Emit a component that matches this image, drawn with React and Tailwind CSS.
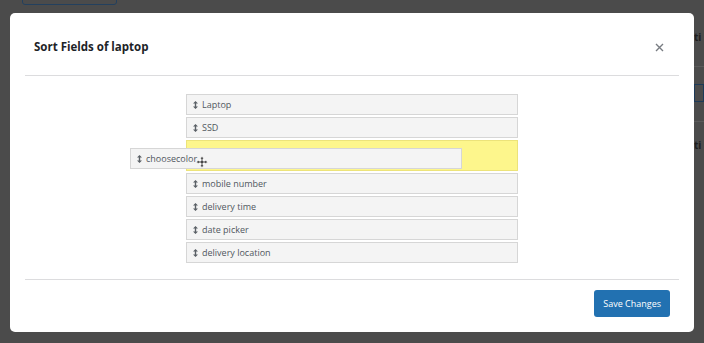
const fields = ["Laptop", "SSD", null, "mobile number", "delivery time", "date picker", "delivery location"];

const SortIcon = () => (
  <svg width="5" height="8" viewBox="0 0 5 8" className="shrink-0">
    <path d="M2.5 0 L5 2.5 H3.2 V5.5 H5 L2.5 8 L0 5.5 H1.8 V2.5 H0 Z" fill="#5a6066" />
  </svg>
);

const MoveCursor = () => (
  <svg width="12" height="12" viewBox="0 0 13 13">
    <path
      d="M6.5 0.5 L9 3 H7.5 V5.5 H10 V4 L12.5 6.5 L10 9 V7.5 H7.5 V10 H9 L6.5 12.5 L4 10 H5.5 V7.5 H3 V9 L0.5 6.5 L3 4 V5.5 H5.5 V3 H4 Z"
      fill="#3a3a3a"
      stroke="#fff"
      strokeWidth="0.9"
    />
  </svg>
);

const FieldRow = ({ label }) => (
  <div className="flex h-[21px] items-center gap-[4px] border border-[#d6d6d6] bg-[#f4f4f4] pl-[6px] text-[9px] text-[#50575e]">
    <SortIcon />
    <span>{label}</span>
  </div>
);

export default function App() {
  return (
    <div className="relative h-[343px] w-[704px] overflow-hidden bg-[#4b4b4b] font-['Open_Sans',sans-serif]">
      {/* dimmed page behind the modal */}
      <div className="flex h-full">
        <div className="pl-[22px]">
          <div className="-mt-[20px] h-[25px] w-[95px] rounded-[3px] border border-[#23405e]" />
        </div>
        <div className="ml-auto flex w-[10px] flex-col text-[10px] font-bold text-[#1e1e1e]">
          <div className="pt-[30px] leading-[14px]">ti</div>
          <div className="mt-[22px] h-px bg-[#5a5a5a]" />
          <div className="mt-[17px] h-[18px] border border-[#1d3a58]" />
          <div className="mt-[19px] h-px bg-[#5a5a5a]" />
          <div className="mt-[16px] leading-[14px]">ti</div>
        </div>
      </div>

      {/* modal */}
      <div className="absolute left-[10px] top-[13px] flex h-[319px] w-[684px] flex-col rounded-[5px] bg-white">
        <div className="mx-[15px] flex h-[63px] items-center justify-between border-b border-[#dcdcde] pl-[9px] pr-[15px] pt-[6px]">
          <h2 className="text-[11.5px] font-bold text-[#1d2327]">Sort Fields of laptop</h2>
          <svg width="9" height="9" viewBox="0 0 9 9">
            <path d="M1 1 L8 8 M8 1 L1 8" stroke="#787c82" strokeWidth="1.4" />
          </svg>
        </div>

        <div className="flex justify-center pt-[18px] pb-[16px]">
          <div className="flex w-[332px] flex-col gap-[2px]">
            {fields.map((f, i) =>
              f ? (
                <FieldRow key={i} label={f} />
              ) : (
                <div key={i} className="relative h-[31px] border border-[#ece37a] bg-[#fdf68c]">
                  <div className="absolute left-[-57px] top-[7px] w-[332px]">
                    <div className="flex h-[21px] items-center gap-[4px] border border-[#d6d6d6] bg-[#f4f4f4] pl-[6px] text-[9px] text-[#50575e]">
                      <SortIcon />
                      <span>choosecolor</span>
                    </div>
                    <div className="absolute left-[66px] top-[8px]">
                      <MoveCursor />
                    </div>
                  </div>
                </div>
              )
            )}
          </div>
        </div>

        <div className="mx-[15px] flex justify-end border-t border-[#dcdcde] pt-[10px] pr-[9px]">
          <button className="h-[27px] rounded-[3px] bg-[#2271b1] px-[9px] text-[9px] text-white">
            Save Changes
          </button>
        </div>
      </div>
    </div>
  );
}
